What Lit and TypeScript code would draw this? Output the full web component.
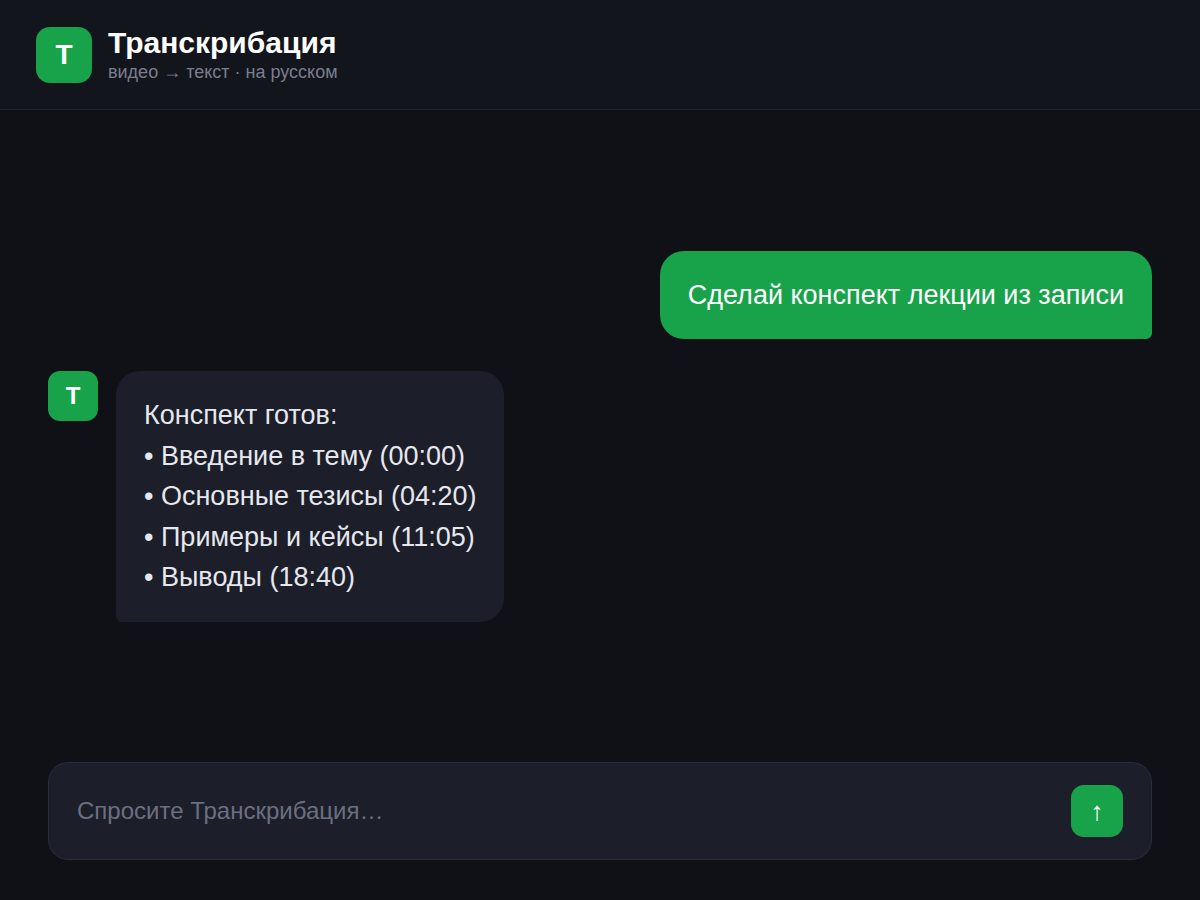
import { LitElement, html, css } from "lit";
import { customElement, property, state } from "lit/decorators.js";

interface Message {
  from: "user" | "bot";
  lines: string[];
}

@customElement("chat-message")
class ChatMessage extends LitElement {
  @property({ attribute: false }) message!: Message;

  static styles = css`
    :host {
      display: flex;
      gap: 18px;
      align-items: flex-start;
    }
    .avatar {
      flex: none;
      display: grid;
      place-items: center;
      width: 50px;
      height: 50px;
      border-radius: 12px;
      background: #18a34a;
      color: #fff;
      font-size: 24px;
      font-weight: 700;
    }
    .bubble {
      max-width: 75%;
      padding: 24px 28px;
      border-radius: 24px 24px 24px 6px;
      background: #1c1e29;
      color: #e6e8ee;
      font-size: 27px;
      line-height: 1.5;
    }
    .user {
      margin-left: auto;
      border-radius: 24px 24px 6px 24px;
      background: #18a34a;
      color: #fff;
    }
    p {
      margin: 0;
    }
  `;

  render() {
    const { from, lines } = this.message;
    return html`
      ${from === "bot" ? html`<div class="avatar" aria-hidden="true">Т</div>` : null}
      <div class="bubble ${from}">${lines.map((line) => html`<p>${line}</p>`)}</div>
    `;
  }
}

@customElement("app-root")
class AppRoot extends LitElement {
  @state() messages: Message[] = [
    { from: "user", lines: ["Сделай конспект лекции из записи"] },
    {
      from: "bot",
      lines: [
        "Конспект готов:",
        "• Введение в тему (00:00)",
        "• Основные тезисы (04:20)",
        "• Примеры и кейсы (11:05)",
        "• Выводы (18:40)",
      ],
    },
  ];

  static styles = css`
    :host {
      display: flex;
      flex-direction: column;
      box-sizing: border-box;
      min-height: 100vh;
      background: #0f1116;
      color: #fff;
      font-family: "Liberation Sans", Arial, sans-serif;
    }
    header {
      display: flex;
      align-items: center;
      gap: 16px;
      padding: 26px 36px;
      border-bottom: 1px solid #1f222d;
      background: #12151c;
    }
    .logo {
      display: grid;
      place-items: center;
      width: 56px;
      height: 56px;
      border-radius: 14px;
      background: #18a34a;
      font-size: 28px;
      font-weight: 700;
    }
    h1 {
      margin: 0;
      font-size: 30px;
      line-height: 34px;
    }
    .tagline {
      margin: 1px 0 0;
      color: #7a7e8f;
      font-size: 18px;
      line-height: 22px;
    }
    main {
      flex: 1;
      display: flex;
      flex-direction: column;
      justify-content: center;
      gap: 32px;
      padding: 0 48px;
    }
    form {
      display: flex;
      align-items: center;
      gap: 16px;
      margin: 0 48px 40px;
      padding: 22px 28px;
      border: 1px solid #2a2d38;
      border-radius: 20px;
      background: #1c1e29;
    }
    input {
      flex: 1;
      min-width: 0;
      padding: 0;
      border: 0;
      outline: 0;
      background: none;
      color: #e6e8ee;
      font: inherit;
      font-size: 24px;
    }
    input::placeholder {
      color: #6b7080;
      opacity: 1;
    }
    button {
      display: grid;
      place-items: center;
      width: 52px;
      height: 52px;
      padding: 0;
      border: 0;
      border-radius: 13px;
      background: #18a34a;
      color: #fff;
      font: inherit;
      font-size: 26px;
    }
  `;

  send(event: Event) {
    event.preventDefault();
    const input = this.renderRoot.querySelector("input")!;
    const text = input.value.trim();
    if (!text) return;
    this.messages = [...this.messages, { from: "user", lines: [text] }];
    input.value = "";
  }

  render() {
    return html`
      <header>
        <div class="logo" aria-hidden="true">Т</div>
        <div>
          <h1>Транскрибация</h1>
          <p class="tagline">видео → текст · на русском</p>
        </div>
      </header>
      <main>
        ${this.messages.map((m) => html`<chat-message .message=${m}></chat-message>`)}
      </main>
      <form @submit=${this.send}>
        <input type="text" aria-label="Сообщение" placeholder="Спросите Транскрибация…" />
        <button type="submit" aria-label="Отправить">↑</button>
      </form>
    `;
  }
}
